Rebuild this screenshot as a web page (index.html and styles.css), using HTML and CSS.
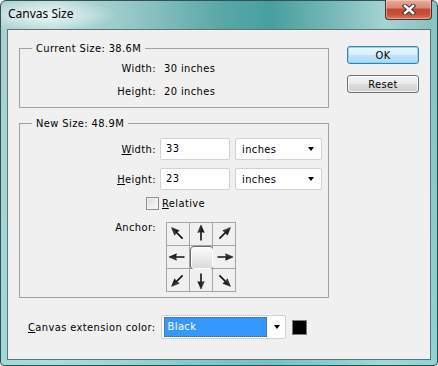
FILE: index.html
```html
<!DOCTYPE html>
<html lang="en">
<head>
    <meta charset="UTF-8">
    <title>Canvas Size</title>
    <link rel="stylesheet" href="styles.css">
</head>
<body>
    <div class="window">
        <div class="titlebar">
            <span class="title">Canvas Size</span>
            <button class="close">
                <svg width="14" height="11" viewBox="0 0 14 11">
                    <path d="M3 2 L11 9 M11 2 L3 9" stroke="#3a3a3a" stroke-width="4.5" stroke-linecap="square"/>
                    <path d="M3 2 L11 9 M11 2 L3 9" stroke="#fff" stroke-width="2.4" stroke-linecap="square"/>
                </svg>
            </button>
        </div>
        <div class="client">
            <div class="main">
                <div class="groups">
                    <fieldset class="group">
                        <legend>Current Size: 38.6M</legend>
                        <div class="rows">
                            <span class="label">Width:</span><span>30 inches</span>
                            <span class="label">Height:</span><span>20 inches</span>
                        </div>
                    </fieldset>
                    <fieldset class="group new-size">
                        <legend>New Size: 48.9M</legend>
                        <div class="form">
                            <label class="label"><u>W</u>idth:</label>
                            <div class="field">
                                <div class="text-input">33</div>
                                <div class="select">inches<span class="arrow"></span></div>
                            </div>
                            <label class="label"><u>H</u>eight:</label>
                            <div class="field">
                                <div class="text-input">23</div>
                                <div class="select">inches<span class="arrow"></span></div>
                            </div>
                            <label class="check"><span class="box"></span><span><u>R</u>elative</span></label>
                            <span class="label anchor-label">Anchor:</span>
                            <div class="anchor">
                                <div class="cell"><svg class="nw" viewBox="0 0 22 22"><use href="#arrow"/></svg></div>
                                <div class="cell"><svg class="n" viewBox="0 0 22 22"><use href="#arrow"/></svg></div>
                                <div class="cell"><svg class="ne" viewBox="0 0 22 22"><use href="#arrow"/></svg></div>
                                <div class="cell"><svg class="w" viewBox="0 0 22 22"><use href="#arrow"/></svg></div>
                                <div class="cell"><div class="center"></div></div>
                                <div class="cell"><svg class="e" viewBox="0 0 22 22"><use href="#arrow"/></svg></div>
                                <div class="cell"><svg class="sw" viewBox="0 0 22 22"><use href="#arrow"/></svg></div>
                                <div class="cell"><svg class="s" viewBox="0 0 22 22"><use href="#arrow"/></svg></div>
                                <div class="cell"><svg class="se" viewBox="0 0 22 22"><use href="#arrow"/></svg></div>
                            </div>
                        </div>
                    </fieldset>
                </div>
                <div class="buttons">
                    <button class="btn default">OK</button>
                    <button class="btn">Reset</button>
                </div>
            </div>
            <div class="extension">
                <span><u>C</u>anvas extension color:</span>
                <div class="combo">
                    <span class="value">Black</span>
                    <span class="arrow"></span>
                </div>
                <span class="swatch"></span>
            </div>
        </div>
    </div>

    <svg width="0" height="0" class="defs">
        <defs>
            <linearGradient id="arrowfill" x1="0" y1="0" x2="1" y2="0">
                <stop offset="0" stop-color="#555"/>
                <stop offset="1" stop-color="#000"/>
            </linearGradient>
            <g id="arrow">
                <path d="M11 17.5 V8" stroke="#111" stroke-width="1.6"/>
                <path d="M11 2 L14.2 9.5 L11 8.6 L7.8 9.5 Z" fill="url(#arrowfill)" stroke="#111" stroke-width="0.6" stroke-linejoin="round"/>
            </g>
        </defs>
    </svg>
</body>
</html>
```

FILE: styles.css
```css
* {
    box-sizing: border-box;
}

body {
    margin: 0;
    background: #fff;
    font-family: "DejaVu Sans Condensed", "DejaVu Sans", sans-serif;
    font-size: 11px;
    letter-spacing: .4px;
    color: #000;
}

.defs {
    position: absolute;
}

.window {
    width: 438px;
    height: 366px;
    display: flex;
    flex-direction: column;
    padding: 0 6px 5px 6px;
    border: 1px solid #35504f;
    border-radius: 6px 6px 4px 4px;
    background:
        radial-gradient(ellipse 75px 16px at 42px 14px, rgba(255, 255, 255, .75), rgba(255, 255, 255, 0)),
        linear-gradient(to bottom, rgba(150, 225, 225, 0) 0, rgba(150, 225, 225, 0) 60px, rgba(150, 225, 225, .55) 100%),
        linear-gradient(90deg, #a7d0d0 0%, #bcdcdc 12%, #95c7c7 30%, #5aa8a8 50%, #489f9f 62%, #7dbcbc 78%, #a5d3d3 88%, #84c2c2 100%);
}

.titlebar {
    height: 28px;
    display: flex;
    justify-content: space-between;
    align-items: flex-start;
    padding-left: 1px;
}

.title {
    font-family: "Noto Sans", sans-serif;
    font-size: 12px;
    letter-spacing: 0;
    line-height: 16px;
    padding-top: 5px;
    color: #000;
}

.close {
    width: 47px;
    height: 20px;
    margin: -1px -1px 0 0;
    padding: 0;
    display: flex;
    align-items: center;
    justify-content: center;
    border: 1px solid #5a2b22;
    border-top: none;
    border-radius: 0 0 4px 4px;
    background: linear-gradient(to bottom, #e9ab9c 0%, #d98a76 40%, #c24a30 50%, #c5503a 75%, #dc7a60 100%);
    box-shadow: inset 0 0 0 1px rgba(255, 220, 210, .45);
}

.client {
    flex: 1;
    border: 1px solid #5d7574;
    background: #f0f0f0;
    padding: 12px 0 0 11px;
}

.main {
    display: flex;
    align-items: flex-start;
    gap: 18px;
}

.groups {
    width: 310px;
    display: flex;
    flex-direction: column;
    gap: 9px;
}

.group {
    margin: 0;
    padding: 0;
    min-width: 0;
    border: 1px solid #a0a0a0;
}

.group legend {
    margin-left: 12px;
    padding: 0 4px;
    line-height: 13px;
}

.rows {
    display: grid;
    grid-template-columns: 136px auto;
    column-gap: 8px;
    line-height: 23px;
    padding: 2px 0 4px;
}

.label {
    text-align: right;
}

.form {
    display: grid;
    grid-template-columns: 136px auto;
    column-gap: 4px;
    row-gap: 8px;
    align-items: center;
    padding: 8px 0 5px;
}

.field {
    display: flex;
    gap: 5px;
}

.text-input {
    width: 70px;
    height: 22px;
    line-height: 20px;
    padding-left: 5px;
    background: #fff;
    border: 1px solid #d2d2d2;
    border-radius: 2px;
}

.select {
    width: 87px;
    height: 22px;
    display: flex;
    align-items: center;
    justify-content: space-between;
    padding-left: 6px;
    background: #fff;
    border: 1px solid #d2d2d2;
    border-radius: 2px;
}

.arrow {
    width: 0;
    height: 0;
    margin-right: 7px;
    border-top: 4px solid #000;
    border-left: 3.5px solid transparent;
    border-right: 3.5px solid transparent;
}

.check {
    grid-column: 1 / -1;
    display: flex;
    align-items: center;
    gap: 3px;
    padding-left: 126px;
    margin-top: -1px;
}

.box {
    width: 13px;
    height: 13px;
    border: 1px solid #8e8f8f;
    background: linear-gradient(135deg, #dcdcdc, #fbfbfb);
    box-shadow: inset 0 0 0 1px #f4f4f4;
}

.anchor-label {
    align-self: start;
    line-height: 13px;
    margin-top: 3px;
}

.anchor {
    width: 70px;
    margin: 4px 0 0 6px;
    display: grid;
    grid-template-columns: repeat(3, 22px);
    grid-auto-rows: 22px;
    gap: 1px;
    padding: 1px;
    background: #a5a5a5;
}

.cell {
    background: #f0f0f0;
    display: grid;
    place-items: center;
}

.cell svg {
    width: 22px;
    height: 22px;
}

.n { transform: rotate(0deg); }
.ne { transform: rotate(45deg); }
.e { transform: rotate(90deg); }
.se { transform: rotate(135deg); }
.s { transform: rotate(180deg); }
.sw { transform: rotate(225deg); }
.w { transform: rotate(270deg); }
.nw { transform: rotate(315deg); }

.center {
    width: 24px;
    height: 24px;
    border: 1px solid #6b6b6b;
    border-radius: 4px;
    background: linear-gradient(to bottom, #fbfbfb, #d9d9d9);
    box-shadow: inset 0 0 0 1px #fff;
}

.buttons {
    display: flex;
    flex-direction: column;
    gap: 11px;
    margin-top: 4px;
}

.btn {
    width: 72px;
    height: 18px;
    padding: 0;
    font-family: inherit;
    font-size: 11px;
    letter-spacing: inherit;
    color: #000;
    border: 1px solid #707070;
    border-radius: 3px;
    background: linear-gradient(to bottom, #f2f2f2 0%, #ebebeb 48%, #dddddd 52%, #cfcfcf 100%);
    box-shadow: inset 0 0 0 1px rgba(255, 255, 255, .7);
}

.btn.default {
    border-color: #3c7fb1;
    background: linear-gradient(to bottom, #eaf6fd 0%, #d9f0fc 48%, #bee6fd 52%, #a7d9f5 100%);
    box-shadow: inset 0 0 0 1px #8ed7f7;
}

.extension {
    display: flex;
    align-items: center;
    margin-top: 17px;
    padding-left: 9px;
}

.combo {
    width: 125px;
    height: 24px;
    margin-left: 5px;
    display: flex;
    align-items: center;
    justify-content: space-between;
    padding: 1px 0 1px 2px;
    background: #fff;
    border: 1px solid #d2d2d2;
    border-radius: 2px;
}

.combo .value {
    width: 103px;
    height: 20px;
    line-height: 18px;
    padding-left: 3px;
    color: #fff;
    background: #3399ff;
    border: 1px dotted #7a5a20;
}

.combo .arrow {
    margin-right: 5px;
}

.swatch {
    width: 15px;
    height: 15px;
    margin-left: 6px;
    background: #000;
    border: 1px solid #7a7a7a;
}
```
